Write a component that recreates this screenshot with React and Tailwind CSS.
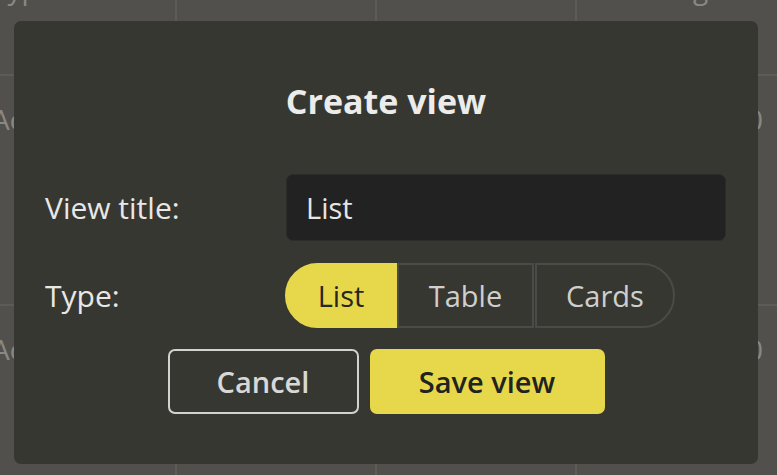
import React, { useState } from 'react';

const font = { fontFamily: '"Open Sans", "Noto Sans", sans-serif' };

const BackgroundTable = () => {
  const rows = [
    { h: 'h-[76px]', cells: ['Type', '', '', 'Tags'], head: true },
    { h: 'h-[230px]', cells: ['Actions', '', '', '0'] },
    { h: 'h-[230px]', cells: ['Actions', '', '', '0'] },
  ];
  return (
    <div className="absolute inset-0 overflow-hidden bg-[#52504c]">
      {rows.map((row, i) => (
        <div key={i} className={`flex ${row.h} border-b-2 border-[#5d5b56]`}>
          <div className="w-[177px] shrink-0 border-r-2 border-[#5d5b56] relative">
            <span className={`absolute left-[-8px] ${row.head ? 'top-[-33px]' : 'top-[22px]'} text-[28px] text-[#8a8883]`}>
              {row.cells[0]}
            </span>
          </div>
          <div className="w-[200px] shrink-0 border-r-2 border-[#5d5b56]" />
          <div className="w-[200px] shrink-0 border-r-2 border-[#5d5b56]" />
          <div className="w-[200px] shrink-0 relative">
            <span className={`absolute ${row.head ? 'left-[85px] top-[-33px]' : 'left-[170px] top-[22px]'} text-[28px] text-[#8a8883]`}>
              {row.cells[3]}
            </span>
          </div>
        </div>
      ))}
    </div>
  );
};

const App = () => {
  const [title, setTitle] = useState('List');
  const [type, setType] = useState('List');

  return (
    <div className="relative w-[777px] h-[475px] overflow-hidden" style={font}>
      <BackgroundTable />
      <div className="absolute left-[14px] top-[21px] w-[744px] h-[443px] rounded-[7px] bg-[#373732] flex flex-col">
        <h2 className="pt-[58px] text-center text-[34px] leading-[44px] font-bold text-[#ececec]">Create view</h2>
        <div className="mt-[51px] pl-[31px] pr-[32px] grid grid-cols-[241px_1fr] items-center gap-y-[22px]">
          <label className="text-[30px] text-[#e8e8e6]">View title:</label>
          <input
            value={title}
            onChange={(e) => setTitle(e.target.value)}
            className="h-[67px] w-full rounded-[7px] bg-[#222222] border border-[#2c2c2a] px-[19px] text-[29px] text-[#e6e6e6] outline-none"
          />
          <label className="text-[30px] text-[#e8e8e6]">Type:</label>
          <div className="flex h-[65px] -ml-px">
            {['List', 'Table', 'Cards'].map((t, i) => {
              const active = type === t;
              const shape = i === 0 ? 'rounded-l-full w-[112px]' : i === 2 ? 'rounded-r-full w-[140px] ml-px' : 'w-[137px]';
              return (
                <button
                  key={t}
                  onClick={() => setType(t)}
                  className={`${shape} h-full border-2 text-[29px] ${active ? 'bg-[#e6d84a] border-[#e6d84a] text-[#262622]' : 'border-[#4a4a46] text-[#cfcfcd]'}`}
                >
                  {t}
                </button>
              );
            })}
          </div>
        </div>
        <div className="mt-[21px] flex justify-center gap-[11px]">
          <button className="w-[191px] h-[65px] rounded-[7px] border-2 border-[#d2d2d0] text-[29px] font-semibold text-[#d8d8d6]">
            Cancel
          </button>
          <button className="w-[235px] h-[65px] rounded-[7px] bg-[#e6d84a] text-[29px] font-semibold text-[#222220]">
            Save view
          </button>
        </div>
      </div>
    </div>
  );
};

export default App;
